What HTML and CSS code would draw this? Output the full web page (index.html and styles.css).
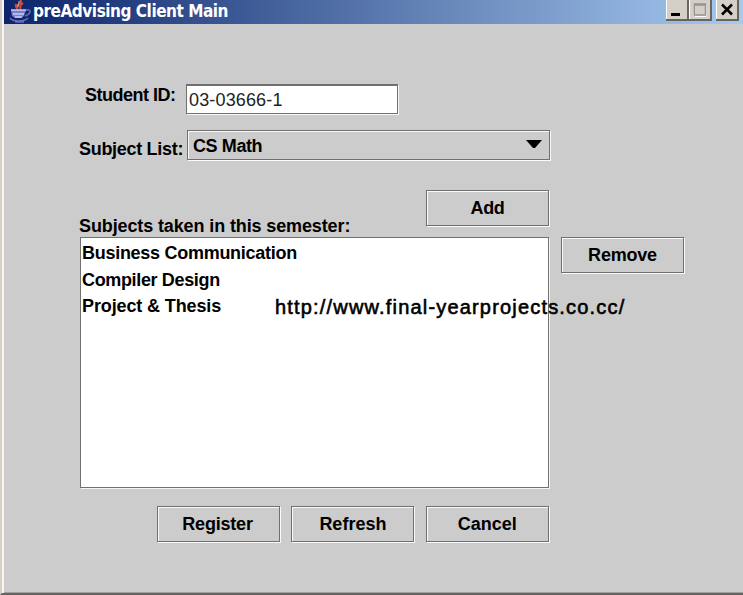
FILE: index.html
```
<!DOCTYPE html>
<html lang="en">
<head>
<meta charset="utf-8">
<title>preAdvising Client Main</title>
<link rel="stylesheet" href="styles.css">
</head>
<body>
<div class="window">
  <header class="titlebar">
    <svg class="java" width="25" height="24" viewBox="0 0 25 24" fill="none">
      <path d="M13 0c4 2-5 5-2 8M16 3c-4 2-2 4-3 6M9 4c-1 3 1 4 2 6" stroke="#c94c3c" stroke-width="2"/>
      <path d="M12 1c1 2-2 3-1 6" stroke="#f2b39d"/>
      <path d="M4 10h15l-2 6-3 2H8l-3-2z" fill="#7c80cc"/>
      <path d="M4 10h15M6 14h11M8 17h7" stroke="#c6caf5" stroke-width="1.5"/>
      <path d="M19 10c6-1 5 4-1 6M3 18c3 4 14 4 18 0M8 22h9" stroke="#686bb9" stroke-width="1.5"/>
    </svg>
    <h1 class="title"><span>preAdvising Client Main</span></h1>
    <div class="controls">
      <button class="control" aria-label="Minimize"><svg width="22" height="20"><path d="M5 13h9v3H5z" fill="#000"/></svg></button>
      <button class="control" aria-label="Maximize"><svg width="22" height="20" fill="none"><path d="M6 4.5h11v12H6z" stroke="#fff"/><path d="M5.5 4h11v11h-11zM5 5h12" stroke="#969490" stroke-width="1.5"/></svg></button>
      <button class="control close" aria-label="Close"><svg width="22" height="20"><path d="M6 4.5l10 10M16 4.5l-10 10" stroke="#000" stroke-width="2.5"/></svg></button>
    </div>
  </header>
  <main class="form">
    <div class="row student">
      <label class="label" for="sid"><span class="t-student">Student ID:</span></label>
      <input class="field" id="sid" value="03-03666-1">
    </div>
    <div class="row subject">
      <div class="label"><span class="t-subject">Subject List:</span></div>
      <div class="combo etched"><span class="t-combo">CS Math</span><svg width="16" height="8"><path d="M0 0h16L9 8H7z"/></svg></div>
    </div>
    <div class="row taken">
      <div class="caption"><span class="t-taken">Subjects taken in this semester:</span></div>
      <button class="button etched"><span class="t-add">Add</span></button>
    </div>
    <div class="row selection">
      <ul class="list">
        <li><span class="t-business">Business Communication</span></li>
        <li><span class="t-compiler">Compiler Design</span></li>
        <li><span class="t-project">Project &amp; Thesis</span></li>
      </ul>
      <button class="button etched"><span class="t-remove">Remove</span></button>
      <div class="watermark">http://www.final-yearprojects.co.cc/</div>
    </div>
    <div class="row actions">
      <button class="button etched"><span class="t-register">Register</span></button>
      <button class="button etched"><span>Refresh</span></button>
      <button class="button etched"><span>Cancel</span></button>
    </div>
  </main>
</div>
</body>
</html>
```
FILE: styles.css
```
* { box-sizing: border-box; }
body { margin: 0; }
.window {
  width: 743px; height: 595px; overflow: hidden;
  background: #ccc; color: #000;
  border-left: 2px solid #d4d0c8; border-bottom: 2px solid #666462;
  box-shadow: inset 2px 0 #f7f4f2, inset 0 -1px #a5a099;
  padding-left: 2px;
  font: bold 18px/22px "Liberation Sans", sans-serif;
}
span { white-space: nowrap; }
button { font: inherit; color: inherit; padding: 0; border: 0; border-radius: 0; }
.titlebar { display: flex; height: 24px; background: linear-gradient(90deg, #0b246a, #a6caf0); }
.java { margin-left: 3px; flex: none; }
.title { margin: 0; padding-left: 1px; flex: 1; color: #fff; font: bold 17px/22px "DejaVu Sans Condensed", "DejaVu Sans", sans-serif; letter-spacing: -.46px; }
.controls { display: flex; padding-right: 4px; }
.control { width: 23px; height: 21px; background: #d4d0c8; border-right: 2px solid #69645f; border-bottom: 2px solid #69645f; box-shadow: inset 1px 0 #fff; overflow: hidden; }
.control svg { display: block; }
.close { margin-left: 4px; }
.form { padding-left: 76px; }
.row { display: flex; }
.student { padding-top: 60px; height: 106px; }
.student .label { width: 106px; padding-left: 5px; }
.t-student { letter-spacing: -.5px; }
.t-subject { letter-spacing: -.3px; }
.t-combo { letter-spacing: -.4px; }
.t-taken { letter-spacing: -.12px; }
.t-business { letter-spacing: -.28px; }
.t-compiler { letter-spacing: -.35px; }
.t-project { letter-spacing: -.12px; }
.t-add { letter-spacing: -.4px; }
.t-remove { letter-spacing: -.2px; }
.t-register { letter-spacing: -.2px; margin-right: 2px; }
.field { width: 212px; height: 30px; padding: 1px 2px 0; border: 1px solid #707070; border-top-width: 2px; border-radius: 0; box-shadow: 1px 1px #f8f8f8; background: #fff; color: #222; font: 18px "Liberation Sans", sans-serif; letter-spacing: .15px; outline: 0; }
.subject { height: 60px; }
.subject .label { width: 107px; padding-top: 8px; margin-left: -1px; margin-right: 1px; }
.etched { border: 1px solid #707070; box-shadow: inset 1px 1px #fafafa, 1px 1px #fafafa; background: #ccc; }
.combo { display: flex; justify-content: space-between; width: 363px; height: 30px; padding: 4px 7px 0 5px; }
.combo svg { margin-top: 5px; }
.taken { height: 47px; }
.caption { width: 346px; padding-top: 25px; margin-left: -1px; margin-right: 1px; }
.button { width: 123px; height: 36px; display: flex; align-items: center; justify-content: center; flex: none; }
.selection { position: relative; height: 269px; gap: 12px; }
.list { width: 469px; height: 251px; margin: 0; padding: 2px 0 0 1px; list-style: none; border: 1px solid #707070; box-shadow: 1px 1px #f5f5f5; background: #fff; line-height: 26.6px; }
.watermark { position: absolute; left: 195px; top: 59px; white-space: nowrap; font-size: 20px; font-weight: normal; letter-spacing: 1.18px; -webkit-text-stroke: .6px #000; }
.actions { padding-left: 77px; gap: 11.4px; }
```
